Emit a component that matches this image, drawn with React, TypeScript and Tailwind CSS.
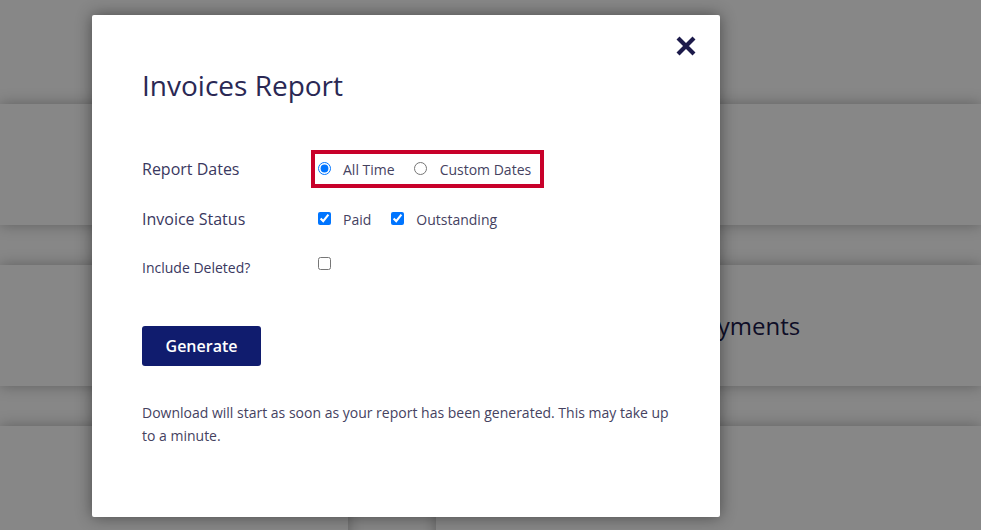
const FONT = "font-['Open_Sans',sans-serif]";

function Card({ className = "", children }: { className?: string; children?: React.ReactNode }) {
  return <div className={`bg-white shadow-[0_0_14px_rgba(0,0,0,0.3)] ${className}`}>{children}</div>;
}

function Option({ type, label, checked, name, tight }: { type: "radio" | "checkbox"; label: string; checked?: boolean; name?: string; tight?: boolean }) {
  return (
    <label className={`flex items-center ${tight ? "-ml-px" : ""}`}>
      <input type={type} name={name} defaultChecked={checked} className="m-0 -mt-[2px] h-[13px] w-[13px]" />
      <span className={`mt-px text-sm text-[#45425f] ${tight ? "ml-[13px]" : "ml-3"}`}>{label}</span>
    </label>
  );
}

export default function App() {
  return (
    <div className={`relative h-[530px] w-[981px] overflow-hidden bg-white ${FONT}`}>
      {/* page behind the overlay */}
      <div className="flex flex-col gap-10 pt-[104px]">
        <Card className="h-[121px]" />
        <Card className="flex h-[121px] items-center pl-[690px] text-2xl text-[#1c1a4a]">Payments</Card>
        <div className="flex gap-[88px]">
          <Card className="h-[200px] w-[348px]" />
          <Card className="h-[200px] flex-1" />
        </div>
      </div>

      <div className="absolute inset-0 bg-black/[.47]" />

      <div className="absolute top-[15px] left-[92px] h-[502px] w-[628px] rounded-[2px] bg-white px-[50px] pt-[50px] shadow-[0_0_16px_rgba(0,0,0,0.45)]">
        <button className="absolute top-[21px] right-[24px] text-[#1c1a4a]">
          <svg width="20" height="20" viewBox="0 0 20 20" fill="none" stroke="currentColor" strokeWidth="4.2" strokeLinecap="square">
            <path d="M3.5 3.5 L16.5 16.5 M16.5 3.5 L3.5 16.5" />
          </svg>
        </button>

        <h2 className="text-[28px] leading-[40px] text-[#2a2854]">Invoices Report</h2>

        <div className="mt-[45px] flex h-[38px] items-center">
          <span className="w-[169px] text-base text-[#3a3860]">Report Dates</span>
          <div className="flex h-[38px] w-[233px] items-center gap-5 border-4 border-[#c8002a] pl-[3px]">
            <Option type="radio" name="dates" label="All Time" checked />
            <Option type="radio" name="dates" label="Custom Dates" tight />
          </div>
        </div>

        <div className="mt-[12px] flex h-[38px] items-center">
          <span className="w-[176px] text-base text-[#3a3860]">Invoice Status</span>
          <div className="flex items-center gap-[20px]">
            <Option type="checkbox" label="Paid" checked />
            <Option type="checkbox" label="Outstanding" checked />
          </div>
        </div>

        <div className="mt-[15px] flex h-[38px] items-start pt-[3px]">
          <span className="w-[176px] pt-[2px] text-sm text-[#3a3860]">Include Deleted?</span>
          <input type="checkbox" className="m-0 mt-[1px] h-[13px] w-[13px]" />
        </div>

        <button className="mt-[35px] h-10 w-[119px] rounded-[3px] bg-[#101c6e] text-base font-semibold text-white">Generate</button>

        <p className="mt-[35px] text-sm leading-[23px] text-[#45425f]">
          Download will start as soon as your report has been generated. This may take up to a minute.
        </p>
      </div>
    </div>
  );
}
